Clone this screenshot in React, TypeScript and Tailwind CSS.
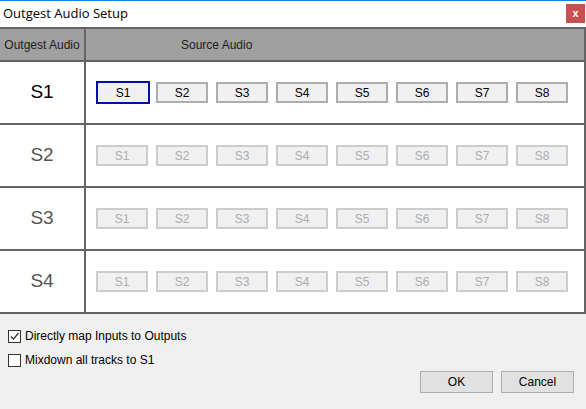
const rows = ["S1", "S2", "S3", "S4"];
const srcs = ["S1", "S2", "S3", "S4", "S5", "S6", "S7", "S8"];

export default function App() {
  return (
    <div className="w-[586px] h-[409px] bg-[#f0f0f0] flex flex-col overflow-hidden" style={{ fontFamily: "'Liberation Sans', Arial, sans-serif" }}>
      <div className="h-[27px] bg-white border-t border-[#1883d7] flex items-center justify-between pl-[3px] pr-[1px]">
        <span className="text-[13px] text-black" style={{ fontFamily: "'Open Sans', sans-serif" }}>Outgest Audio Setup</span>
        <div className="w-[19px] h-[19px] bg-[#c75050] text-white text-[11px] font-bold flex items-center justify-center mb-[1px]">x</div>
      </div>
      <div className="bg-white border-2 border-[#646464] border-l-0 flex flex-col">
        <div className="h-[33px] bg-[#a0a0a0] flex text-[12px] text-[#222] border-b-2 border-[#646464]">
          <div className="w-[86px] flex items-center justify-center border-r-2 border-[#646464]">Outgest Audio</div>
          <div className="pl-[95px] flex items-center">Source Audio</div>
        </div>
        {rows.map((r, i) => (
          <div key={r} className={`flex ${i < 3 ? "h-[63px] border-b-2 border-[#646464]" : "h-[61px]"}`}>
            <div className={`w-[86px] flex items-center justify-center border-r-2 border-[#646464] text-[19px] ${i === 0 ? "text-black" : "text-[#555]"}`}>{r}</div>
            <div className="flex items-center pl-[10px] gap-[8px]">
              {srcs.map((s, j) => {
                const active = i === 0;
                const sel = active && j === 0;
                return (
                  <div
                    key={s}
                    className={`flex items-center justify-center text-[12px] bg-[#f0f0f0] border-2 ${sel ? "border-[#0010a8] w-[54px] h-[23px] -mr-[2px]" : active ? "w-[52px] h-[21px] border-[#adadad]" : "w-[52px] h-[21px] border-[#cccccc] text-[#adadad]"} ${active ? "text-black" : ""}`}
                  >
                    {s}
                  </div>
                );
              })}
            </div>
          </div>
        ))}
      </div>
      <div className="flex flex-col px-[8px] pt-[13px] text-[12px] text-black gap-[6px]">
        <label className="flex items-center gap-[4px]">
          <span className="w-[13px] h-[13px] border border-[#333] bg-white flex items-center justify-center">
            <svg width="11" height="11" viewBox="0 0 11 11"><path d="M2 5.5l2.5 2.5L9.5 2" stroke="#333" strokeWidth="1.2" fill="none" /></svg>
          </span>
          Directly map Inputs to Outputs
        </label>
        <label className="flex items-center gap-[4px]">
          <span className="w-[13px] h-[13px] border border-[#333] bg-white" />
          Mixdown all tracks to S1
        </label>
      </div>
      <div className="flex justify-end gap-[8px] pr-[12px] mt-[2px]">
        <div className="w-[73px] h-[22px] bg-[#e1e1e1] border border-[#adadad] text-[12px] flex items-center justify-center">OK</div>
        <div className="w-[73px] h-[22px] bg-[#e1e1e1] border border-[#adadad] text-[12px] flex items-center justify-center">Cancel</div>
      </div>
    </div>
  );
}
